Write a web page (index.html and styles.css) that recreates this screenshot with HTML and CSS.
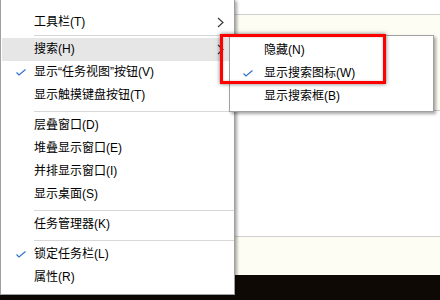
FILE: index.html
```html
<!DOCTYPE html>
<html lang="zh-CN">
<head>
<meta charset="utf-8">
<link rel="stylesheet" href="styles.css">
</head>
<body>
<div class="screen">
  <div class="desk">
    <div class="band band-top"></div>
    <div class="band band-cream1"></div>
    <div class="band band-white"></div>
    <div class="band band-cream2"></div>
    <div class="taskbar"></div>
  </div>

  <div class="menu main-menu">
    <div class="item">工具栏(T)<svg class="chev" width="7" height="11" viewBox="0 0 7 11"><path d="M1 1 L6 5.5 L1 10" fill="none" stroke="#333" stroke-width="1.1"/></svg></div>
    <div class="sep sep-first"></div>
    <div class="item hover">搜索(H)<svg class="chev" width="7" height="11" viewBox="0 0 7 11"><path d="M1 1 L6 5.5 L1 10" fill="none" stroke="#333" stroke-width="1.1"/></svg></div>
    <div class="item"><svg class="check" width="10" height="7" viewBox="0 0 10 7"><path d="M0.5 3.5 L3 6 L9.5 0.5" fill="none" stroke="#2a6fd0" stroke-width="1.1"/></svg>显示“任务视图”按钮(V)</div>
    <div class="item">显示触摸键盘按钮(T)</div>
    <div class="sep"></div>
    <div class="item">层叠窗口(D)</div>
    <div class="item">堆叠显示窗口(E)</div>
    <div class="item">并排显示窗口(I)</div>
    <div class="item">显示桌面(S)</div>
    <div class="sep"></div>
    <div class="item">任务管理器(K)</div>
    <div class="sep"></div>
    <div class="item"><svg class="check" width="10" height="7" viewBox="0 0 10 7"><path d="M0.5 3.5 L3 6 L9.5 0.5" fill="none" stroke="#2a6fd0" stroke-width="1.1"/></svg>锁定任务栏(L)</div>
    <div class="item">属性(R)</div>
  </div>

  <div class="menu sub-menu">
    <div class="item sub-item">隐藏(N)</div>
    <div class="item sub-item"><svg class="check sub-check" width="10" height="7" viewBox="0 0 10 7"><path d="M0.5 3.5 L3 6 L9.5 0.5" fill="none" stroke="#2a6fd0" stroke-width="1.1"/></svg>显示搜索图标(W)</div>
    <div class="item sub-item">显示搜索框(B)</div>
  </div>

  <div class="highlight-box"></div>
</div>
</body>
</html>
```

FILE: styles.css
```css
* { box-sizing: border-box; }
html, body { margin: 0; padding: 0; }
body {
  width: 440px;
  height: 300px;
  overflow: hidden;
  font-family: "Liberation Sans", "Noto Sans CJK SC", sans-serif;
  font-size: 12px;
  color: #000;
}
.screen {
  position: relative;
  width: 440px;
  height: 300px;
}
.desk {
  display: flex;
  flex-direction: column;
  height: 300px;
}
.band-top {
  height: 15px;
  background: #fff;
  border-bottom: 1px solid #cfcfcf;
}
.band-cream1 {
  height: 96px;
  background: #fdfdf3;
  border-bottom: 1px solid #cfcfcf;
}
.band-white {
  height: 126px;
  background: #fff;
  border-bottom: 1px solid #cfcfcf;
}
.band-cream2 {
  height: 38px;
  background: #fdfdf3;
}
.taskbar {
  flex: 1;
  background: #0f0905;
}

.menu {
  position: absolute;
  background: #fff;
  border: 1px solid #a0a0a0;
  box-shadow: 2px 2px 3px rgba(0,0,0,0.35);
}
.main-menu {
  left: 0;
  top: -1px;
  width: 235px;
  padding: 11px 0 5px 1px;
}
.item {
  position: relative;
  height: 23px;
  line-height: 23px;
  padding-left: 32px;
  white-space: nowrap;
}
.item.hover {
  background: #e6e6e6;
}
.chev {
  position: absolute;
  right: 10px;
  top: 6px;
}
.check {
  position: absolute;
  left: 14px;
  top: 8px;
}
.sep {
  height: 7px;
  padding: 4px 0 2px 32px;
}
.sep::after {
  content: "";
  display: block;
  height: 1px;
  background: #d7d7d7;
}
.sep-first {
  height: 4px;
  padding-top: 1px;
  padding-bottom: 2px;
}

.sub-menu {
  left: 229px;
  top: 35px;
  width: 205px;
  height: 77px;
  padding: 3px 0;
}
.sub-item {
  padding-left: 34px;
}
.sub-check {
  left: 13px;
}

.highlight-box {
  position: absolute;
  left: 220px;
  top: 34px;
  width: 166px;
  height: 50px;
  border: 3px solid #f00;
  box-shadow: 0 0 4px rgba(0,0,0,0.55), inset 0 0 2px rgba(0,0,0,0.3);
}
```
